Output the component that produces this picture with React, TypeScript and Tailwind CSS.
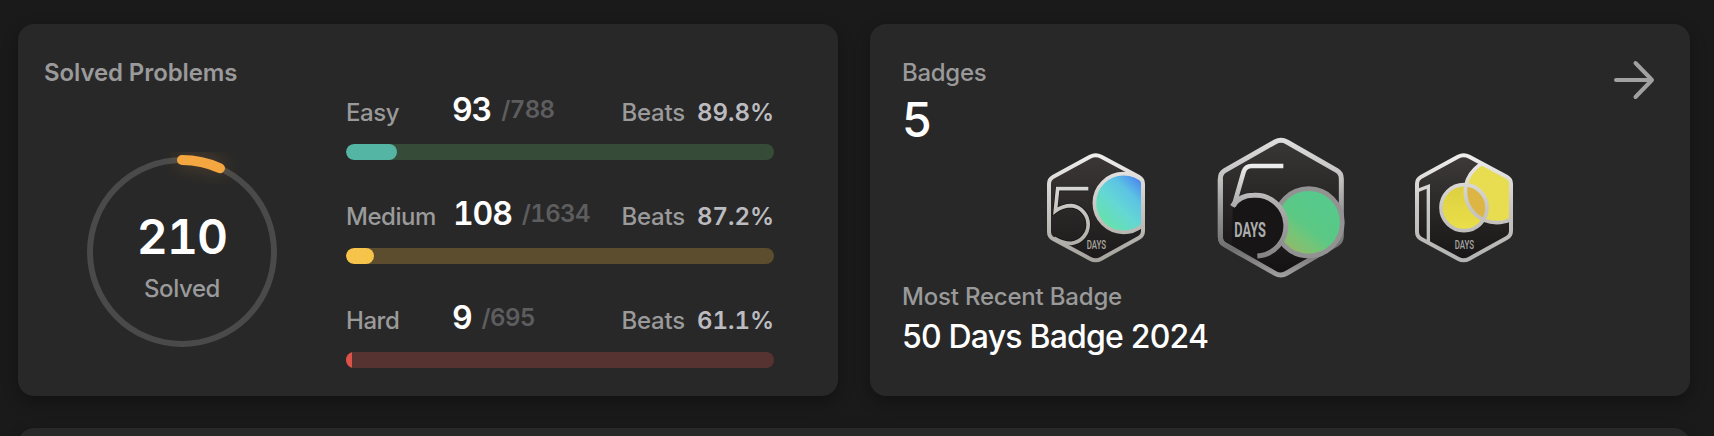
import React from "react";

type Level = {
  name: string;
  solved: number;
  total: number;
  beats: string;
  fill: string;
  track: string;
};

const levels: Level[] = [
  { name: "Easy", solved: 93, total: 788, beats: "89.8%", fill: "rounded-full bg-[#54b5a5]", track: "bg-[#364b38]" },
  { name: "Medium", solved: 108, total: 1634, beats: "87.2%", fill: "rounded-full bg-[#f6c44a]", track: "bg-[#5b4d2e]" },
  { name: "Hard", solved: 9, total: 695, beats: "61.1%", fill: "bg-[#de5349]", track: "bg-[#563231]" },
];

function LevelRow({ level }: { level: Level }) {
  return (
    <div>
      <div className="flex h-10 items-start text-2xl leading-8">
        <div className="mt-[5px] min-w-[106px] pr-[17px] font-[450] tracking-[-0.45px] text-[#9a9a9b]">{level.name}</div>
        <div className="mt-0.5 text-[32px] font-semibold leading-8 tracking-[-1.1px] tabular-nums text-white">{level.solved}</div>
        <div className="ml-[10px] mt-0.5 font-semibold tracking-[-0.6px] tabular-nums text-[#5d5d5f]">/{level.total}</div>
        <div className="ml-auto mt-[5px] font-[450] tracking-[-0.2px] text-[#9a9a9b]">Beats</div>
        <div className="ml-3 mt-[5px] w-[77px] whitespace-nowrap font-semibold tracking-[0px] tabular-nums text-[#bcbcc0]">{level.beats}</div>
      </div>
      <div className={`mt-3 h-4 overflow-hidden rounded-full ${level.track}`}>
        <div
          className={`h-full ${level.fill}`}
          style={{ width: `${Math.round((level.solved / level.total) * 428)}px` }}
        />
      </div>
    </div>
  );
}

function SolvedRing() {
  return (
    <div className="ml-[38px] mt-[63px] grid h-[200px] w-[200px]">
      <svg viewBox="0 0 200 200" className="col-start-1 row-start-1 h-[200px] w-[200px] overflow-hidden" fill="none">
        <defs>
          <filter id="glow" x="-100%" y="-200%" width="300%" height="500%">
            <feGaussianBlur stdDeviation="9" />
          </filter>
        </defs>
        <circle cx="100" cy="100" r="92" stroke="#4a4a4a" strokeWidth="6" />
        <path d="M100 8A92 92 0 0 1 138 16.2" stroke="#f4a640" strokeOpacity="0.25" strokeWidth="10" strokeLinecap="round" filter="url(#glow)" />
        <path d="M100 8A92 92 0 0 1 138 16.2" stroke="#f4a640" strokeWidth="10" strokeLinecap="round" />
      </svg>
      <div className="col-start-1 row-start-1 flex flex-col items-center pt-[61px]">
        <div className="text-5xl font-semibold leading-[48px] tracking-[-0.9px] tabular-nums text-white">210</div>
        <div className="mt-3 text-2xl font-[450] leading-8 tracking-[-0.4px] text-[#9a9a9b]">Solved</div>
      </div>
    </div>
  );
}

function MetalStops({ low }: { low: string }) {
  return (
    <>
      <stop offset="0" stopColor="#f0efee" />
      <stop offset="0.5" stopColor="#c9c7c3" />
      <stop offset="1" stopColor={low} />
    </>
  );
}

const smallHex =
  "M180 50Q197 41 214 50L326 110Q339 117 339 132L339 272Q339 287 326 294L214 356Q197 366 180 356L70 297Q57 290 57 275L57 132Q57 117 70 110Z";

function FiftyBlueBadge() {
  return (
    <svg viewBox="0 0 390 390" className="mt-[10px] h-[130px] w-[130px]" fill="none">
      <defs>
        <linearGradient id="a-metal" gradientUnits="userSpaceOnUse" x1="200" y1="40" x2="200" y2="365"><MetalStops low="#a5a29c" /></linearGradient>
        <linearGradient id="a-dark" x1="0" y1="0" x2="0" y2="1"><stop stopColor="#3b3737" /><stop offset="1" stopColor="#1c191a" /></linearGradient>
        <linearGradient id="a-fill" gradientUnits="userSpaceOnUse" x1="215" y1="255" x2="345" y2="120">
          <stop stopColor="#66e3a6" /><stop offset="0.4" stopColor="#64d7d3" /><stop offset="0.68" stopColor="#5cc3e4" /><stop offset="0.88" stopColor="#4f97ec" /><stop offset="1" stopColor="#3a6ae8" />
        </linearGradient>
        <clipPath id="a-clip"><path d={smallHex} /></clipPath>
      </defs>
      <path d={smallHex} fill="url(#a-dark)" />
      <g clipPath="url(#a-clip)">
        <circle cx="282" cy="189" r="94" fill="#100e0f" />
        <circle cx="281" cy="189" r="88" fill="url(#a-fill)" stroke="url(#a-metal)" strokeWidth="11" />
      </g>
      <path d="M175 146H83L76 213Q98 197 125 197A57 57 0 0 1 125 310Q100 311 72 294" stroke="#171415" strokeWidth="15" />
      <path d="M175 146H83L76 213Q98 197 125 197A57 57 0 0 1 125 310Q100 311 72 294" stroke="url(#a-metal)" strokeWidth="11" />
      <path d={smallHex} stroke="url(#a-metal)" strokeWidth="12" />
      <text x="170" y="326" textLength="58" lengthAdjust="spacingAndGlyphs" fill="#aaa79f" className="font-['Roboto'] text-[36px] font-medium">DAYS</text>
    </svg>
  );
}

const largeHex =
  "M210 36Q228 26 246 36L396 122Q409 130 409 146L409 318Q409 334 396 342L246 429Q228 440 210 430L59 344Q46 336 46 320L46 146Q46 130 59 122Z";

function FiftyGreenBadge() {
  return (
    <svg viewBox="0 0 450 465" className="h-[155px] w-[150px]" fill="none">
      <defs>
        <linearGradient id="b-metal" gradientUnits="userSpaceOnUse" x1="228" y1="26" x2="228" y2="440">
          <stop stopColor="#dedede" /><stop offset="0.3" stopColor="#c0c0c0" /><stop offset="0.55" stopColor="#929292" /><stop offset="0.8" stopColor="#6f6f6f" /><stop offset="1" stopColor="#a0a0a0" />
        </linearGradient>
        <linearGradient id="b-five" gradientUnits="userSpaceOnUse" x1="160" y1="100" x2="160" y2="385">
          <stop stopColor="#f0f0f0" /><stop offset="0.4" stopColor="#b0b0b0" /><stop offset="1" stopColor="#838383" />
        </linearGradient>
        <linearGradient id="b-dark" x1="0" y1="0" x2="0" y2="1"><stop stopColor="#393736" /><stop offset="1" stopColor="#131111" /></linearGradient>
        <linearGradient id="b-fill" gradientUnits="userSpaceOnUse" x1="250" y1="350" x2="350" y2="220">
          <stop stopColor="#8dbb6b" /><stop offset="0.3" stopColor="#72c579" /><stop offset="0.5" stopColor="#5cc884" /><stop offset="1" stopColor="#56c98b" />
        </linearGradient>
      </defs>
      <path d={largeHex} fill="url(#b-dark)" />
      <path d={largeHex} stroke="url(#b-metal)" strokeWidth="15" />
      <circle cx="311" cy="277" r="101" fill="url(#b-fill)" stroke="#929292" strokeWidth="14" />
      <path d="M84 226Q104 196 146 196A91 91 0 0 1 157 378L80 345Z" fill="#171515" />
      <path d="M86 229L116 125Q122 108 140 108H235" stroke="url(#b-five)" strokeWidth="14" />
      <path d="M82 229Q104 196 146 196A91 91 0 0 1 157 378" stroke="url(#b-five)" strokeWidth="15" />
      <path d="M46 146V320Q46 336 59 344L110 373" stroke="url(#b-metal)" strokeWidth="15" />
      <text x="88" y="320" textLength="95" lengthAdjust="spacingAndGlyphs" fill="#adadad" className="font-['Roboto'] text-[60px] font-bold">DAYS</text>
    </svg>
  );
}

function HundredBadge() {
  return (
    <svg viewBox="6 0 390 390" className="mt-[10px] h-[130px] w-[130px]" fill="none">
      <defs>
        <linearGradient id="c-metal" gradientUnits="userSpaceOnUse" x1="200" y1="40" x2="200" y2="365"><MetalStops low="#b2b2b2" /></linearGradient>
        <linearGradient id="c-dark" x1="0" y1="0" x2="0" y2="1"><stop stopColor="#3d3a39" /><stop offset="1" stopColor="#171515" /></linearGradient>
        <linearGradient id="c-fill" x1="0" y1="0" x2="0" y2="1"><stop stopColor="#ddcf40" /><stop offset="1" stopColor="#eae04a" /></linearGradient>
        <clipPath id="c-clip"><path d={smallHex} /></clipPath>
        <clipPath id="c-ring"><circle cx="198" cy="203" r="69" /></clipPath>
      </defs>
      <path d={smallHex} fill="url(#c-dark)" />
      <g clipPath="url(#c-clip)">
        <circle cx="296" cy="154" r="94" fill="#e8dc50" />
        <circle cx="198" cy="203" r="69" fill="url(#c-fill)" />
        <circle cx="296" cy="154" r="94" fill="#ddb545" clipPath="url(#c-ring)" />
        <circle cx="198" cy="203" r="69" stroke="url(#c-metal)" strokeWidth="11" />
        <circle cx="296" cy="154" r="94" stroke="url(#c-metal)" strokeWidth="11" />
      </g>
      <path d="M58 152L91 139V306" stroke="url(#c-metal)" strokeWidth="10" />
      <path d={smallHex} stroke="url(#c-metal)" strokeWidth="12" />
      <text x="170" y="326" textLength="58" lengthAdjust="spacingAndGlyphs" fill="#a5a5a3" className="font-['Roboto'] text-[36px] font-medium">DAYS</text>
    </svg>
  );
}

const card = "rounded-2xl bg-[#282828] shadow-[0_6px_16px_rgba(0,0,0,0.3)]";

export default function App() {
  return (
    <div className="flex h-[436px] flex-col gap-8 overflow-hidden bg-[#1a1a1a] pl-[18px] pr-6 pt-6 font-['Inter',sans-serif]">
      <div className="grid h-[372px] shrink-0 grid-cols-2 gap-8">
        <section className={`flex pl-[26px] pr-16 ${card}`}>
          <div className="w-[302px] pt-[33px]">
            <h2 className="text-2xl font-semibold leading-8 tracking-[-0.1px] text-[#9a9a9b]">Solved Problems</h2>
            <SolvedRing />
          </div>
          <div className="flex flex-1 flex-col gap-9 pt-[68px]">
            {levels.map((level) => (
              <LevelRow key={level.name} level={level} />
            ))}
          </div>
        </section>
        <section className={`flex flex-col pl-8 pr-8 pt-8 ${card}`}>
          <div className="flex items-start justify-between">
            <div>
              <h2 className="mt-px text-2xl font-medium leading-8 tracking-[-0.3px] text-[#9a9a9b]">Badges</h2>
              <div className="mt-[11px] text-5xl font-[450] leading-[39px] text-white">5</div>
            </div>
            <svg viewBox="0 0 48 48" className="h-12 w-12" fill="none" stroke="#a1a1a1" strokeWidth="4" strokeLinecap="round" strokeLinejoin="round">
              <path d="M6 24H42M25.5 7L42 24L25.5 41" />
            </svg>
          </div>
          <div className="-mt-[9px] flex items-start gap-[45px] self-center">
            <FiftyBlueBadge />
            <FiftyGreenBadge />
            <HundredBadge />
          </div>
          <div className="-mt-1 text-2xl font-medium leading-8 tracking-[-0.2px] text-[#9a9a9b]">Most Recent Badge</div>
          <div className="mt-1 text-[32px] font-medium leading-10 tracking-[-0.8px] text-white">50 Days Badge 2024</div>
        </section>
      </div>
      <section className={`h-20 shrink-0 ${card}`} />
    </div>
  );
}
